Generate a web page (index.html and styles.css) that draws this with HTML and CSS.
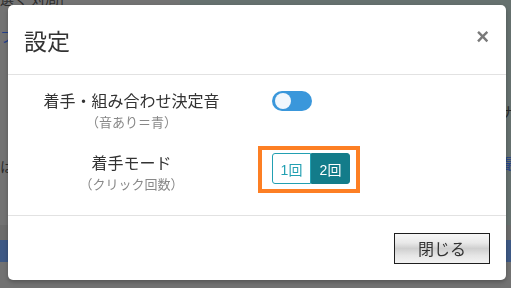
FILE: index.html
```html
<!DOCTYPE html>
<html lang="ja">
<head>
    <meta charset="UTF-8">
    <meta name="viewport" content="width=device-width, initial-scale=1.0">
    <title>設定</title>
    <link rel="stylesheet" href="styles.css">
</head>
<body>
    <div class="page">
        <div class="page-main">
            <div class="page-side">
                <p class="side-title">選ぐ 対局]</p>
                <p class="side-link">フ</p>
                <p class="side-text">は</p>
            </div>
            <div class="page-panel">
                <p class="panel-text">ナ</p>
                <p class="panel-link">最</p>
            </div>
        </div>
        <div class="page-gap"></div>
        <div class="page-band"></div>
    </div>

    <div class="modal">
        <div class="modal-header">
            <h1>設定</h1>
            <span class="close">&times;</span>
        </div>

        <div class="modal-body">
            <div class="setting-row row-sound">
                <div class="setting-label">
                    <div class="label-main">着手・組み合わせ決定音</div>
                    <div class="label-sub">（音あり＝青）</div>
                </div>
                <div class="setting-control">
                    <span class="toggle"><span class="knob"></span></span>
                </div>
            </div>

            <div class="setting-row row-mode">
                <div class="setting-label">
                    <div class="label-main">着手モード</div>
                    <div class="label-sub">（クリック回数）</div>
                </div>
                <div class="setting-control">
                    <div class="highlight">
                        <div class="btn-group">
                            <button class="btn-mode">1回</button>
                            <button class="btn-mode active">2回</button>
                        </div>
                    </div>
                </div>
            </div>
        </div>

        <div class="modal-footer">
            <button class="btn-close">閉じる</button>
        </div>
    </div>
</body>
</html>
```

FILE: styles.css
```css
body {
    margin: 0;
    padding: 0;
    font-family: "Noto Sans CJK JP", "Liberation Sans", sans-serif;
    background-color: #727272;
    overflow: hidden;
}

p {
    margin: 0;
}

/* page behind the dialog */
.page {
    height: 288px;
    display: flex;
    flex-direction: column;
}

.page-main {
    display: flex;
    height: 225px;
}

.page-side {
    width: 180px;
    background-color: #737373;
    font-size: 14px;
    line-height: 16px;
}

.side-title {
    margin-top: -10px;
    color: #2a2a2a;
}

.side-link {
    margin-top: 22px;
    color: #23408a;
}

.side-text {
    margin-top: 114px;
    color: #2a2a2a;
}

.page-panel {
    flex: 1;
    background-color: #66716f;
    display: flex;
    flex-direction: column;
    align-items: flex-end;
    font-size: 14px;
    line-height: 16px;
}

.panel-text {
    margin-top: 103px;
    margin-right: -4px;
    color: #2a2a2a;
}

.panel-link {
    margin-top: 36px;
    margin-right: -6px;
    color: #23408a;
}

.page-gap {
    height: 15px;
    background-color: #6c6c6c;
}

.page-band {
    height: 22px;
    background-color: #3e5985;
}

/* dialog */
.modal {
    position: fixed;
    top: 5px;
    left: 8px;
    width: 498px;
    height: 275px;
    background: #fff;
    border-radius: 5px;
    display: flex;
    flex-direction: column;
    box-shadow: 0 2px 4px rgba(0, 0, 0, 0.25);
}

.modal-header {
    height: 69px;
    padding: 0 17px 0 16px;
    display: flex;
    align-items: center;
    justify-content: space-between;
    border-bottom: 1px solid #e2e2e2;
}

.modal-header h1 {
    margin: 0;
    font-size: 23px;
    font-weight: normal;
    color: #333;
    line-height: 30px;
}

.close {
    font-family: "Liberation Sans", sans-serif;
    font-size: 22px;
    font-weight: bold;
    color: #7a7a7a;
    line-height: 20px;
    margin-top: -6px;
}

.modal-body {
    padding: 14px 0 22px;
    display: flex;
    flex-direction: column;
    gap: 15px;
}

.setting-row {
    display: flex;
    align-items: flex-start;
}

.setting-label {
    width: 247px;
    text-align: center;
}

.row-mode .setting-label {
    padding-top: 5px;
}

.label-main {
    font-size: 16px;
    line-height: 22px;
    color: #333;
}

.label-sub {
    margin-top: 2px;
    font-size: 13px;
    line-height: 18px;
    color: #888;
}

.toggle {
    display: block;
    margin: 2px 0 0 17px;
    width: 40px;
    height: 20px;
    border-radius: 10px;
    background-color: #3a97db;
    position: relative;
}

.knob {
    position: absolute;
    top: 2px;
    left: 3px;
    width: 16px;
    height: 16px;
    border-radius: 50%;
    background-color: #f1f7fd;
}

.highlight {
    margin-left: 3px;
    border: 4px solid #fd7f24;
    padding: 3px 6px 5px 10px;
}

.btn-group {
    display: flex;
}

.btn-mode {
    width: 39px;
    height: 31px;
    padding: 0;
    font-family: "Liberation Sans", "Noto Sans CJK JP", sans-serif;
    font-size: 14px;
    background: #fff;
    color: #22a0b2;
    border: 1px solid #22a0b2;
    border-radius: 3px 0 0 3px;
}

.btn-mode.active {
    background-color: #137c8a;
    border-color: #137c8a;
    color: #fff;
    border-radius: 0 3px 3px 0;
}

.modal-footer {
    flex: 1;
    display: flex;
    align-items: center;
    justify-content: flex-end;
    padding: 0 16px;
    border-top: 1px solid #e2e2e2;
}

.btn-close {
    width: 96px;
    height: 31px;
    padding: 0;
    font-family: "Noto Sans CJK JP", sans-serif;
    font-size: 16px;
    color: #333;
    border: 1px solid #1e1e1e;
    border-radius: 0;
    background: linear-gradient(#f7f7f7 0%, #e9e9e9 30%, #cfcfcf 50%, #e6e6e6 75%, #f2f2f2 100%);
}
```
